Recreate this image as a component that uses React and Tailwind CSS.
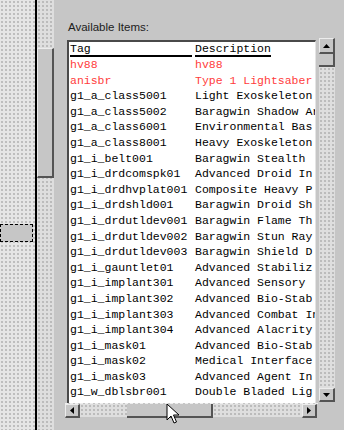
import React from 'react';

const items = [
  ['hv88', 'hv88', true],
  ['anisbr', 'Type 1 Lightsaber', true],
  ['g1_a_class5001', 'Light Exoskeleton'],
  ['g1_a_class5002', 'Baragwin Shadow Armor'],
  ['g1_a_class6001', 'Environmental Bas'],
  ['g1_a_class8001', 'Heavy Exoskeleton'],
  ['g1_i_belt001', 'Baragwin Stealth'],
  ['g1_i_drdcomspk01', 'Advanced Droid In'],
  ['g1_i_drdhvplat001', 'Composite Heavy P'],
  ['g1_i_drdshld001', 'Baragwin Droid Sh'],
  ['g1_i_drdutldev001', 'Baragwin Flame Th'],
  ['g1_i_drdutldev002', 'Baragwin Stun Ray'],
  ['g1_i_drdutldev003', 'Baragwin Shield D'],
  ['g1_i_gauntlet01', 'Advanced Stabiliz'],
  ['g1_i_implant301', 'Advanced Sensory'],
  ['g1_i_implant302', 'Advanced Bio-Stab'],
  ['g1_i_implant303', 'Advanced Combat In'],
  ['g1_i_implant304', 'Advanced Alacrity'],
  ['g1_i_mask01', 'Advanced Bio-Stab'],
  ['g1_i_mask02', 'Medical Interface'],
  ['g1_i_mask03', 'Advanced Agent In'],
  ['g1_w_dblsbr001', 'Double Bladed Lig'],
  ['g1_w_dblsbr002', 'Double Bladed Lig'],
];

const stipple =
  'bg-[radial-gradient(circle,#a9a9a9_0.6px,transparent_0.9px)] bg-size-[4px_4px]';

const Arrow = ({ dir }) => {
  const pts = {
    up: '0,4 7,4 3.5,0',
    down: '0,0 7,0 3.5,4',
    left: '4,0 4,7 0,3.5',
    right: '0,0 0,7 4,3.5',
  }[dir];
  const vert = dir === 'up' || dir === 'down';
  return (
    <svg width={vert ? 7 : 4} height={vert ? 4 : 7} viewBox={vert ? '0 0 7 4' : '0 0 4 7'}>
      <polygon points={pts} fill="#000" />
    </svg>
  );
};

const Btn = ({ className = '', children }) => (
  <div
    className={`flex items-center justify-center bg-[#c6c6c6] border-t border-l border-t-[#ececec] border-l-[#ececec] border-r-2 border-b-2 border-r-[#545454] border-b-[#545454] ${className}`}
  >
    {children}
  </div>
);

const App = () => {
  return (
    <div className="relative flex w-[344px] h-[430px] overflow-hidden bg-[#c6c6c6] font-['Liberation_Sans',sans-serif]">
      {/* left pane */}
      <div className={`w-[35px] shrink-0 bg-[#e6e6e6] ${stipple} pt-[224px]`}>
        <div className="w-[33px] h-[18px] bg-[#c6c6c6] border border-dashed border-black" />
      </div>
      <div className="w-[2px] shrink-0 bg-black" />
      {/* left scrollbar */}
      <div className={`w-[17px] shrink-0 bg-[#dedede] ${stipple} pt-[48px]`}>
        <Btn className="w-[17px] h-[130px]" />
      </div>

      {/* panel */}
      <div className="flex-1 flex flex-col pt-[20px]">
        <div className="pl-[14px] h-[15px] text-[11.5px] leading-[15px] text-[#1c1c1c]">
          Available Items:
        </div>
        <div className="flex mt-[3px]">
          <div className="ml-[11px] w-[253px] flex flex-col">
            <div className="ml-[2px] mt-[2px] w-[249px] h-[363px] bg-white border-t-2 border-l-2 border-[#4a4a4a] border-r border-r-[#e4e4e4] overflow-hidden font-['Liberation_Mono',monospace] text-[11.5px] leading-[15.6px] whitespace-nowrap">
              <div className="flex h-[15px] pl-[1px] pt-[0px] text-black">
                <span className="w-[122px] border-b-2 border-black leading-[13px]">Tag</span>
                <span className="ml-[3px] border-b-2 border-black leading-[13px]">Description</span>
              </div>
              {items.map(([tag, desc, red]) => (
                <div
                  key={tag}
                  className={`flex h-[15.6px] pl-[1px] ${red ? 'text-[#ff3c3c]' : 'text-black'}`}
                >
                  <span className="w-[125px] shrink-0">{tag}</span>
                  <span>{desc}</span>
                </div>
              ))}
            </div>
            {/* horizontal scrollbar */}
            <div className="flex h-[14px] w-[253px] border-t border-dashed border-[#eeeeee]">
              <Btn className="w-[15px] h-[14px]">
                <Arrow dir="left" />
              </Btn>
              <div className={`w-[47px] bg-[#dedede] ${stipple}`} />
              <Btn className="w-[86px] h-[14px] border-t-0 border-l-0 border-r-0" />
              <div className={`w-[89px] bg-[#dedede] ${stipple}`} />
              <Btn className="w-[15px] h-[14px]">
                <Arrow dir="right" />
              </Btn>
            </div>
          </div>
          {/* vertical scrollbar */}
          <div className="ml-[1px] w-[16px] flex flex-col">
            <Btn className="w-[16px] h-[16px]">
              <Arrow dir="up" />
            </Btn>
            <Btn className="w-[16px] h-[13px] border-t-0 border-l-0" />
            <div className={`h-[321px] bg-[#dedede] ${stipple}`} />
            <Btn className="w-[16px] h-[14px]">
              <Arrow dir="down" />
            </Btn>
          </div>
        </div>
      </div>

      {/* mouse pointer */}
      <svg
        className="absolute left-[166px] top-[403px]"
        width="14"
        height="22"
        viewBox="0 0 14 22"
      >
        <path
          d="M1 1 L1 17 L5 13 L8 20 L10.5 19 L7.5 12 L13 12 Z"
          fill="#fff"
          stroke="#000"
          strokeWidth="1"
          strokeLinejoin="miter"
        />
      </svg>
    </div>
  );
};

export default App;
